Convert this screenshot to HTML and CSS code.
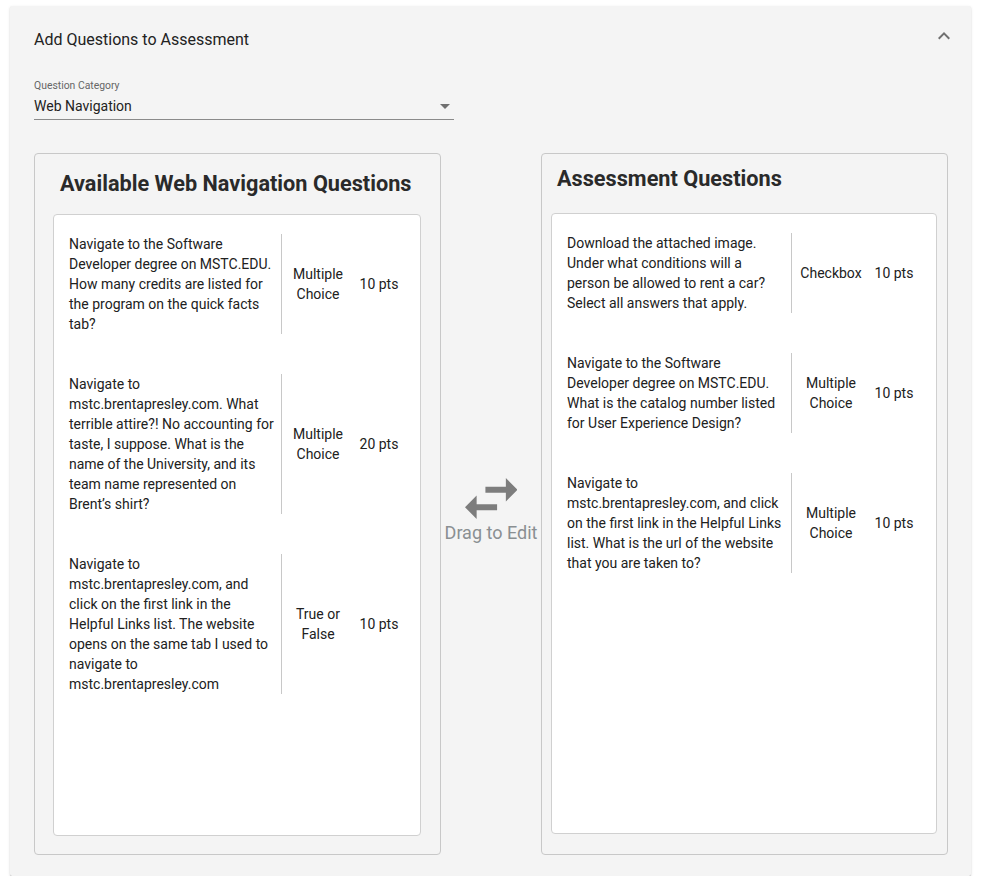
FILE: index.html
```html
<!DOCTYPE html>
<html lang="en">
<head>
<meta charset="utf-8">
<title>Add Questions to Assessment</title>
<link rel="stylesheet" href="styles.css">
</head>
<body>
<div class="panel">
  <div class="panel-header">
    <span class="panel-title">Add Questions to Assessment</span>
    <svg class="chevron" viewBox="6 8 12 7.41" width="12" height="7.4"><path d="M12 8l-6 6 1.41 1.41L12 10.83l4.59 4.58L18 14z"/></svg>
  </div>
  <div class="panel-body">
    <div class="field">
      <div class="field-label">Question Category</div>
      <div class="select">
        <span class="select-value">Web Navigation</span>
        <svg class="drop" viewBox="7 10 10 5" width="10" height="5"><path d="M7 10l5 5 5-5z"/></svg>
      </div>
    </div>
    <div class="columns">
      <section class="col col-left">
        <h2 class="col-title">Available Web Navigation Questions</h2>
        <div class="list">
          <div class="row">
            <div class="q-text">Navigate to the Software Developer degree on MSTC.EDU. How many credits are listed for the program on the quick facts tab?</div>
            <div class="q-type">Multiple Choice</div>
            <div class="q-pts">10 pts</div>
          </div>
          <div class="row">
            <div class="q-text">Navigate to mstc.brentapresley.com. What terrible attire?! No accounting for taste, I suppose. What is the name of the University, and its team name represented on Brent’s shirt?</div>
            <div class="q-type">Multiple Choice</div>
            <div class="q-pts">20 pts</div>
          </div>
          <div class="row">
            <div class="q-text">Navigate to mstc.brentapresley.com, and click on the first link in the Helpful Links list. The website opens on the same tab I used to navigate to mstc.brentapresley.com</div>
            <div class="q-type">True or False</div>
            <div class="q-pts">10 pts</div>
          </div>
        </div>
      </section>
      <div class="middle">
        <svg class="swap" viewBox="3 5 18 14" width="52.5" height="41"><path d="M6.99 11L3 15l3.99 4v-3H14v-2H6.99v-3zM21 9l-3.99-4v3H10v2h7.01v3L21 9z"/></svg>
        <div class="drag-label">Drag to Edit</div>
      </div>
      <section class="col col-right">
        <h2 class="col-title">Assessment Questions</h2>
        <div class="list">
          <div class="row">
            <div class="q-text">Download the attached image. Under what conditions will a person be allowed to rent a car? Select all answers that apply.</div>
            <div class="q-type">Checkbox</div>
            <div class="q-pts">10 pts</div>
          </div>
          <div class="row">
            <div class="q-text">Navigate to the Software Developer degree on MSTC.EDU. What is the catalog number listed for User Experience Design?</div>
            <div class="q-type">Multiple Choice</div>
            <div class="q-pts">10 pts</div>
          </div>
          <div class="row">
            <div class="q-text">Navigate to mstc.brentapresley.com, and click on the first link in the Helpful Links list. What is the url of the website that you are taken to?</div>
            <div class="q-type">Multiple Choice</div>
            <div class="q-pts">10 pts</div>
          </div>
        </div>
      </section>
    </div>
  </div>
</div>
</body>
</html>
```
FILE: styles.css
```css
* { box-sizing: border-box; }

body {
  margin: 0;
  background: #ffffff;
  font-family: Roboto, "Liberation Sans", Arial, sans-serif;
  color: #212121;
}

.panel {
  margin: 6px 0 0 10px;
  width: 961px;
  background: #f4f4f4;
  border-radius: 2px;
  box-shadow: 0 2px 1px -1px rgba(0,0,0,.25), 0 1px 1px 0 rgba(0,0,0,.16), 0 1px 3px 0 rgba(0,0,0,.12);
}

.panel-header {
  height: 64px;
  padding: 0 21px 0 24px;
  display: flex;
  align-items: center;
  justify-content: space-between;
}

.panel-title {
  font-size: 16px;
  line-height: 20px;
  color: #222;
  margin-top: 4px;
}

.chevron { fill: #707070; margin-top: -4px; }

.panel-body {
  padding: 0 23px 21px 24px;
}

.field {
  width: 420px;
  padding-top: 9px;
  border-bottom: 1px solid #8a8a8a;
  padding-bottom: 3px;
}

.field-label {
  font-size: 10.4px;
  line-height: 14px;
  color: #666;
}

.select {
  margin-top: 3px;
  display: flex;
  align-items: center;
  justify-content: space-between;
  height: 20px;
}

.select-value {
  font-size: 14px;
  line-height: 20px;
  color: #222;
}

.drop { fill: #707070; margin-right: 4px; }

.columns {
  margin-top: 33px;
  height: 702px;
  display: flex;
}

.col {
  width: 407px;
  border: 1px solid #c8c8c8;
  border-radius: 4px;
  display: flex;
  flex-direction: column;
}

.col-left { padding: 18px 19px 18px 18px; }
.col-right { padding: 13px 10px 20px 9px; }

.col-title {
  margin: 0;
  font-size: 21.7px;
  line-height: 24px;
  font-weight: 700;
  color: #2a2a2a;
  white-space: nowrap;
}

.col-left .col-title { padding-left: 7px; margin-bottom: 18px; }
.col-right .col-title { padding-left: 6px; margin-bottom: 22px; }

.list {
  flex: 1;
  background: #fff;
  border: 1px solid #d0d0d0;
  border-radius: 4px;
}

.row {
  display: grid;
  padding: 19px 0 21px 15px;
  font-size: 14px;
  line-height: 20px;
}

.col-left .row { grid-template-columns: 212px 73px 50px; }
.col-right .row { grid-template-columns: 224px 79px 48px; }

.q-text { padding-right: 6px; }

.q-type {
  border-left: 1px solid #c8c8c8;
  display: flex;
  align-items: center;
  justify-content: center;
  text-align: center;
}

.q-pts {
  display: flex;
  align-items: center;
  justify-content: center;
  white-space: nowrap;
}

.middle {
  width: 100px;
  padding-top: 12px;
  display: flex;
  flex-direction: column;
  align-items: center;
  justify-content: center;
}

.swap { fill: #7d7d7d; }

.drag-label {
  margin-top: 4px;
  font-size: 18px;
  line-height: 20px;
  color: #8a8f92;
  white-space: nowrap;
}
```
